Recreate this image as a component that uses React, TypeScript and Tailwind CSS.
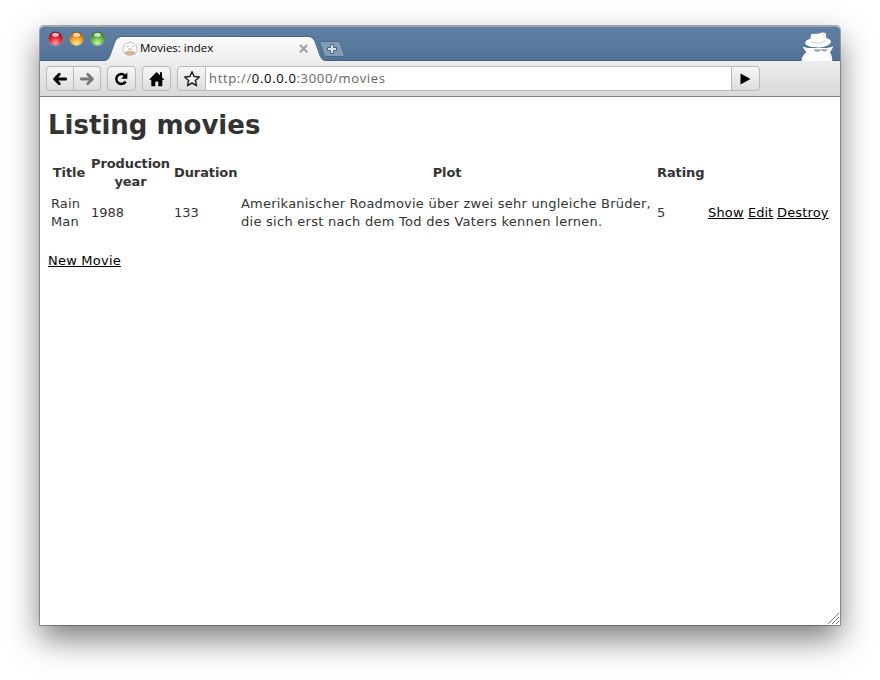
import React from "react";

const body = "font-['DejaVu_Sans',Verdana,sans-serif]";
const ui = "font-['Open_Sans','Noto_Sans',sans-serif]";
const btn =
  "box-border flex h-[25px] items-center justify-center border border-[#b8b8b8] bg-linear-to-b from-[#f6f6f6] to-[#dedede]";

function Light({ kind }: { kind: "red" | "amber" | "green" }) {
  const c = {
    red: ["#ffa09c", "#e9222c", "#8d0d18"],
    amber: ["#fff07a", "#f19a2b", "#9a5511"],
    green: ["#d4f59a", "#62b740", "#356f25"],
  }[kind];
  return (
    <svg width="15" height="16" viewBox="0 0 15 16">
      <defs>
        <radialGradient id={kind} cx="50%" cy="82%" r="78%">
          <stop offset="0" stopColor={c[0]} />
          <stop offset="0.55" stopColor={c[1]} />
          <stop offset="1" stopColor={c[2]} />
        </radialGradient>
      </defs>
      <circle cx="7.5" cy="8.2" r="7.3" fill="#86a3bf" opacity="0.7" />
      <circle cx="7.5" cy="7.6" r="7" fill={`url(#${kind})`} />
      <ellipse cx="7.5" cy="3.7" rx="3.4" ry="2" fill="#fff" opacity="0.7" />
    </svg>
  );
}

function TabStrip() {
  return (
    <div className="relative h-[35px] bg-linear-to-b from-[#5f80a3] to-[#527196] rounded-t-[4px] border-t border-[#94a9bb]">
      <svg className="absolute left-0 top-0" width="800" height="34" viewBox="40 27 800 34">
        <defs>
          <linearGradient id="tab" x1="0" y1="0" x2="0" y2="1">
            <stop offset="0" stopColor="#fbfbfb" />
            <stop offset="1" stopColor="#ededed" />
          </linearGradient>
        </defs>
        <path d="M40 60.5H840" stroke="#435e7f" />
        <path
          d="M104 61C108 60.5 109 58 110 55.5L114.500 43C116 39 118 37 122 37H308C312 37 314 39 315.500 43L320 55.500C321 58 322 60.500 326 61Z"
          fill="url(#tab)"
        />
        <path
          d="M104 60.500C108 60.300 109 58 110 55.500L114.500 43C116 39 118 36.500 122 36.500H308C312 36.500 314 39 315.500 43L320 55.500C321 58 322 60.300 326 60.500"
          fill="none"
          stroke="#48658a"
          strokeWidth="0.9"
        />
        <path
          d="M321.500 41.500H337.500C339 41.500 340 42.300 340.500 43.500L344 54C344.500 55.500 344 56.500 342.500 56.500H327C325.500 56.500 324.500 55.700 324 54.500L320 43.500C319.600 42.300 320.300 41.500 321.500 41.500Z"
          fill="#829cb8"
          stroke="#4c698b"
        />
        <path
          d="M330.500 44.500H333.500V47.500H336.500V50.500H333.500V53.500H330.500V50.500H327.500V47.500H330.500Z"
          fill="#d9e1e9"
          stroke="#4c6581"
        />
        <path d="M300 45L307.300 52.300M307.300 45L300 52.300" stroke="#a0a0a0" strokeWidth="2" />
        <g>
          <rect x="122" y="41" width="16" height="15" fill="#fcfcfc" />
          <path
            d="M124.500 45.500L123 43.500M135 45.500L137 43.500M125.500 44C127 42 133 42 134.500 44C137 46 138 50 136 53C134 56 126 56 124 53C122 50 123 46 125.500 44Z"
            fill="#fff"
            stroke="#bdbdbd"
          />
          <path d="M127 46.500H128.500M132 46.500H133.500M128 49H132" stroke="#aaa" />
          <ellipse cx="130" cy="52.900" rx="5" ry="1.900" fill="#e4b48f" stroke="#c9ab94" strokeWidth="0.600" />
        </g>
        <g fill="#fff">
          <path d="M801.500 61C801.500 57 803.500 54 806.500 52.500L802.500 46.800L808 48L827 48L833.500 46.500L830 52.500C831.500 54.500 832.300 57.500 832.300 61Z" />
          <path d="M805.200 42.800C805.200 41 807.500 39.500 810.500 38.800L811 34.500C813 33 816 34.500 819 33.500C821.500 32.300 824 32 825.500 33L826.300 38C829.500 38.800 831.200 40.300 831 42C829.500 45.800 823 47.500 818 47.500C811 47.500 805.200 45.800 805.200 42.800Z" />
        </g>
        <path d="M811 41.500C815 44 821 44 825.500 40.800" fill="none" stroke="#d0d3d6" strokeWidth="1.100" />
        <path d="M823 33.500L824.500 38.500" fill="none" stroke="#e3e5e7" strokeWidth="2" />
        <path d="M813.500 49.200H827.500L827 50.500C826 51.900 823 51.900 821.800 50.400L820.200 50.200C819 52.700 815 52.500 813.500 49.200Z" fill="#a2a6aa" />
      </svg>
      <div className="absolute left-[8px] top-[4px] flex gap-[6px]">
        <Light kind="red" />
        <Light kind="amber" />
        <Light kind="green" />
      </div>
      <span className={`${ui} absolute left-[100px] top-[13px] whitespace-nowrap text-[11.5px] leading-[16px] text-black`}>
        Movies: index
      </span>
    </div>
  );
}

function Toolbar() {
  return (
    <div className={`${ui} flex h-[36px] items-start border-b border-[#7d7d7d] bg-linear-to-b from-[#ededed] to-[#d9d9d9] pl-[6px] pt-[5px]`}>
      <div className="flex">
        <div className={`${btn} w-[28px] rounded-l-[4px]`}>
          <svg width="16" height="14" viewBox="0 0 16 14" fill="none" stroke="#000" strokeWidth="2.800" strokeLinecap="round" strokeLinejoin="round">
            <path d="M13.700 7H3M7.300 2.300L2.600 7L7.300 11.700" />
          </svg>
        </div>
        <div className={`${btn} w-[27px] rounded-r-[4px] border-l-0`}>
          <svg width="16" height="14" viewBox="0 0 16 14" fill="none" stroke="#777" strokeWidth="2.800" strokeLinecap="round" strokeLinejoin="round">
            <path d="M2.300 7H13M8.700 2.300L13.400 7L8.700 11.700" />
          </svg>
        </div>
      </div>
      <div className={`${btn} ml-[6px] w-[29px] rounded-[4px]`}>
        <svg className="-ml-px" width="16" height="16" viewBox="0 0 16 16">
          <path d="M11.800 4.300A5 5 0 1 0 12.600 10.500" fill="none" stroke="#000" strokeWidth="2.500" />
          <path d="M14.300 1.500V7.700H8.100Z" />
        </svg>
      </div>
      <div className={`${btn} ml-[6px] w-[29px] rounded-[4px]`}>
        <svg width="16" height="16" viewBox="0 0 16 16">
          <path d="M7.500 1L11 4.300V1.300H13V6.200L15.500 8.800H13.300V15.300H9.300V10.500H6.300V15.300H2.300V8.800H0Z" />
        </svg>
      </div>
      <div className={`${btn} ml-[6px] w-[29px] rounded-l-[4px]`}>
        <svg width="18" height="18" viewBox="0 0 18 18">
          <path d="M9 1.800L11.100 6.500L16.300 7L12.400 10.500L13.500 15.700L9 13L4.500 15.700L5.600 10.500L1.700 7L6.900 6.500Z" fill="#f4f4f4" stroke="#222" strokeWidth="1.500" strokeLinejoin="round" />
        </svg>
      </div>
      <div className="flex h-[25px] w-[525px] items-center border-y border-[#b8b8b8] bg-white pl-[3px] text-[13px] text-[#666]">
        <span className="whitespace-nowrap tracking-[0.67px]">
          http://<span className="text-black">0.0.0.0</span>:3000/movies
        </span>
      </div>
      <div className={`${btn} w-[29px] rounded-r-[4px]`}>
        <svg width="11" height="12" viewBox="0 0 11 12">
          <path d="M0.500 0.500L10.500 6L0.500 11.500Z" />
        </svg>
      </div>
    </div>
  );
}

function Movies() {
  return (
    <div className={`${body} relative h-[528px] bg-white pl-[8px] text-[13px] leading-[18px] text-[#333]`}>
      <h1 className="pt-[12px] text-[26px] font-bold leading-[32px] whitespace-nowrap">Listing movies</h1>
      <table className="ml-[3px] mt-[13px] table-fixed border-collapse w-[781px]">
        <colgroup>
          <col className="w-[40px]" />
          <col className="w-[83px]" />
          <col className="w-[67px]" />
          <col className="w-[416px]" />
          <col className="w-[51px]" />
          <col className="w-[40px]" />
          <col className="w-[29px]" />
          <col className="w-[55px]" />
        </colgroup>
        <thead>
          <tr className="h-[38px] whitespace-nowrap tracking-[-0.1px]">
            <th className="p-0 pr-[4px]">Title</th>
            <th className="p-0 pr-[4px]">Production<br />year</th>
            <th className="p-0 pr-[4px]">Duration</th>
            <th className="p-0 pr-[4px]">Plot</th>
            <th className="p-0 pr-[4px]">Rating</th>
            <th colSpan={3} />
          </tr>
        </thead>
        <tbody>
          <tr className="h-[42px] whitespace-nowrap">
            <td className="p-0 tracking-[0.1px]">Rain<br />Man</td>
            <td className="p-0">1988</td>
            <td className="p-0">133</td>
            <td className="p-0">
              <span className="tracking-[0.22px]">Amerikanischer Roadmovie über zwei sehr ungleiche Brüder,</span><br />
              <span className="tracking-[0.265px]">die sich erst nach dem Tod des Vaters kennen lernen.</span>
            </td>
            <td className="p-0">5</td>
            <td className="p-0"><a className="text-black underline tracking-[0.15px]">Show</a></td>
            <td className="p-0"><a className="text-black underline">Edit</a></td>
            <td className="p-0"><a className="text-black underline tracking-[0.15px]">Destroy</a></td>
          </tr>
        </tbody>
      </table>
      <div className="mt-[18px]">
        <a className="text-black underline tracking-[0.22px]">New Movie</a>
      </div>
      <svg className="absolute bottom-px right-px" width="11" height="11" viewBox="0 0 11 11" stroke="#777" strokeWidth="1">
        <path d="M0 11L11 0M4 11L11 4M8 11L11 8" />
      </svg>
    </div>
  );
}

export default function App() {
  return (
    <div className="h-[680px] w-[880px] overflow-hidden bg-white pl-[40px] pt-[26px]">
      <div className="h-[599px] w-[800px] rounded-t-[4px] shadow-[0_0_0_1px_rgba(0,0,0,0.3),0_14px_32px_rgba(0,0,0,0.52)]">
        <TabStrip />
        <Toolbar />
        <Movies />
      </div>
    </div>
  );
}
